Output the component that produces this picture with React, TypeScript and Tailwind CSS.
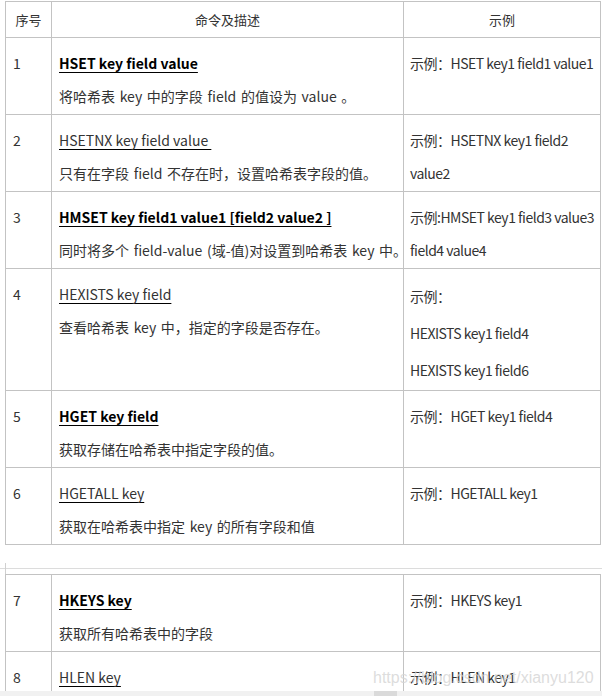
const rows = [
  {
    no: '1',
    cmd: 'HSET key field value',
    bold: true,
    desc: '将哈希表 key 中的字段 field 的值设为 value 。',
    example: ['示例：HSET key1 field1 value1'],
  },
  {
    no: '2',
    cmd: 'HSETNX key field value\u00a0',
    bold: false,
    desc: '只有在字段 field 不存在时，设置哈希表字段的值。',
    example: ['示例：HSETNX key1 field2', 'value2'],
  },
  {
    no: '3',
    cmd: 'HMSET key field1 value1 [field2 value2 ]',
    bold: true,
    desc: '同时将多个 field-value (域-值)对设置到哈希表 key 中。',
    example: ['示例:HMSET key1 field3 value3', 'field4 value4'],
  },
  {
    no: '4',
    cmd: 'HEXISTS key field',
    bold: false,
    desc: '查看哈希表 key 中，指定的字段是否存在。',
    example: ['示例：', 'HEXISTS key1 field4', 'HEXISTS key1 field6'],
    spaced: true,
  },
  {
    no: '5',
    cmd: 'HGET key field',
    bold: true,
    desc: '获取存储在哈希表中指定字段的值。',
    example: ['示例：HGET key1 field4'],
  },
  {
    no: '6',
    cmd: 'HGETALL key',
    bold: false,
    desc: '获取在哈希表中指定 key 的所有字段和值',
    example: ['示例：HGETALL key1'],
  },
]

const moreRows = [
  {
    no: '7',
    cmd: 'HKEYS key',
    bold: true,
    desc: '获取所有哈希表中的字段',
    example: ['示例：HKEYS key1'],
  },
  {
    no: '8',
    cmd: 'HLEN key',
    bold: false,
    desc: '获取哈希表中字段的数量',
    example: ['示例：HLEN key1'],
  },
]

type Row = (typeof rows)[number] & { spaced?: boolean }

const border = 'border border-[#c3c3c3]'

function Colgroup() {
  return (
    <colgroup>
      <col className="w-[46px]" />
      <col className="w-[352px]" />
      <col className="w-[197px]" />
    </colgroup>
  )
}

function CommandRow({ row }: { row: Row }) {
  return (
    <tr>
      <td className={`${border} align-top pl-[7px] pt-[9px] pb-px leading-[33px]`}>{row.no}</td>
      <td className={`${border} align-top pl-[7px] pt-[9px] pb-px leading-[33px]`}>
        <div>
          <span
            className={`underline decoration-black underline-offset-[3px] whitespace-pre ${
              row.bold ? 'font-bold text-black' : 'text-[#333]'
            }`}
          >
            {row.cmd}
          </span>
        </div>
        <div className="whitespace-pre [word-spacing:1.5px]">{row.desc}</div>
      </td>
      <td
        className={`${border} align-top pl-[6px] pt-[9px] pb-px whitespace-nowrap tracking-[-0.5px] ${
          row.spaced ? 'leading-[37px]' : 'leading-[33px]'
        }`}
      >
        {row.example.map((line, i) => (
          <div key={i}>{line}</div>
        ))}
      </td>
    </tr>
  )
}

export default function App() {
  return (
    <div
      className="relative h-[696px] w-[602px] overflow-hidden bg-white text-[14px] text-[#333]"
      style={{ fontFamily: '"Noto Sans CJK SC", "Noto Sans", sans-serif' }}
    >
      <div className="pl-[5px] pt-[1px]">
        <table className="table-fixed border-collapse w-[596px]">
          <Colgroup />
          <thead>
            <tr className="h-[36px] text-[13px]">
              <th className={`${border} align-middle font-normal`}>序号</th>
              <th className={`${border} align-middle font-normal`}>命令及描述</th>
              <th className={`${border} align-middle font-normal`}>示例</th>
            </tr>
          </thead>
          <tbody>
            {rows.map((r) => (
              <CommandRow key={r.no} row={r} />
            ))}
          </tbody>
        </table>
      </div>

      <div className="h-[23px]" />
      <div className="relative h-px bg-[#dcdcdc]">
        <div className="absolute left-[5px] -top-[5px] h-[11px] w-px bg-[#d0d0d0]" />
      </div>
      <div className="h-[5px]" />

      <div className="pl-[5px]">
        <table className="table-fixed border-collapse w-[596px]">
          <Colgroup />
          <tbody>
            {moreRows.map((r) => (
              <CommandRow key={r.no} row={r} />
            ))}
          </tbody>
        </table>
      </div>

      <div
        className="absolute left-[373px] top-[666px] text-[16px] text-[#d4d4d4]/80"
        style={{ fontFamily: '"Liberation Sans", Arial, sans-serif' }}
      >
        https://blog.csdn.net/xianyu120
      </div>

      <div className="absolute bottom-0 left-0 h-[5px] w-full bg-[#f1f1f1]">
        <div className="ml-[374px] h-full w-[23px] bg-[#dadada]" />
      </div>
    </div>
  )
}
